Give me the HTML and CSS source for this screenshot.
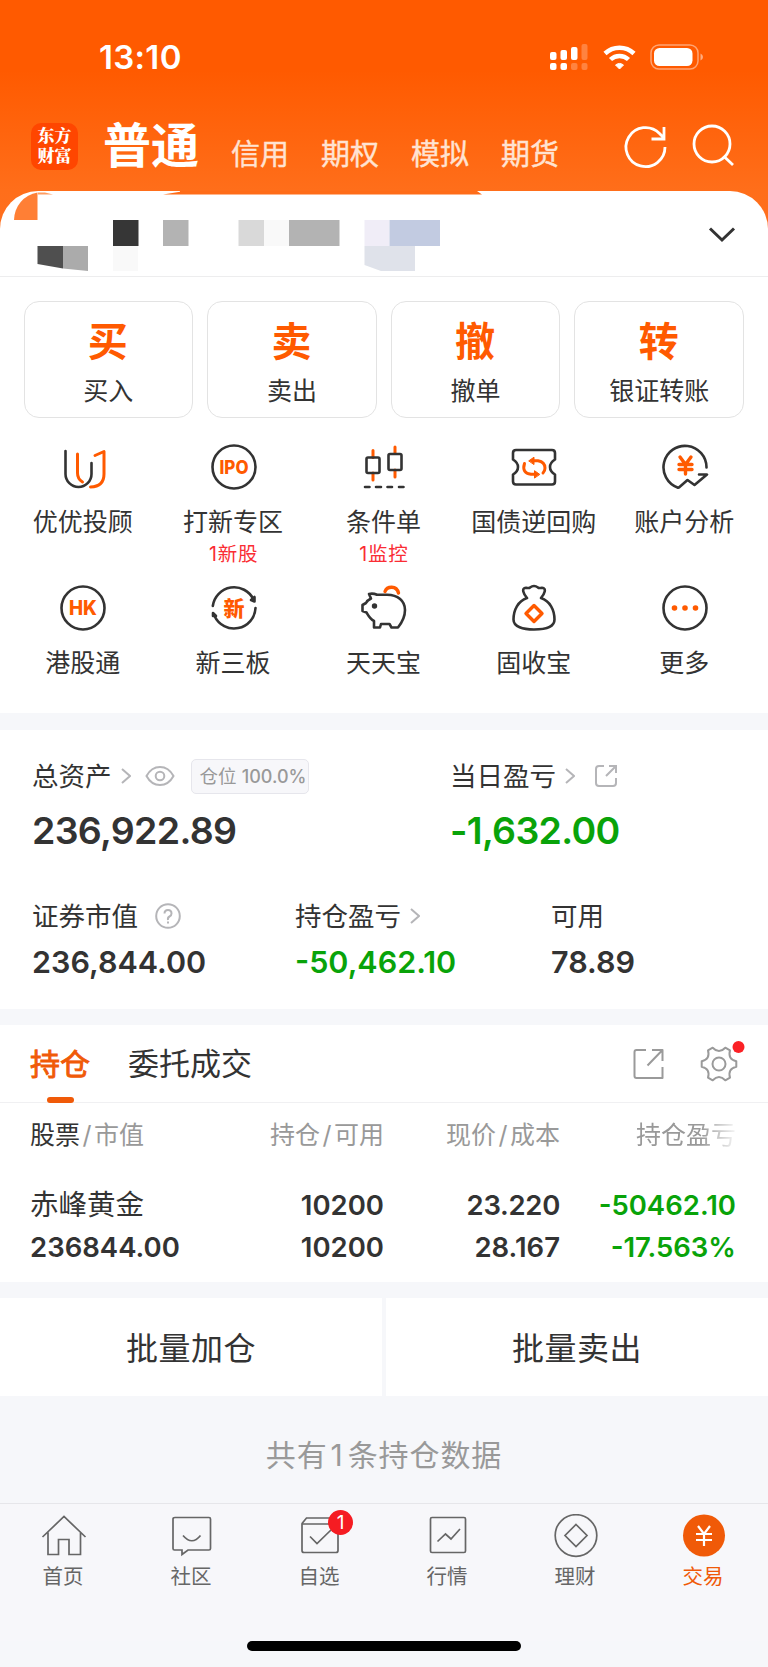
FILE: index.html
```html
<!DOCTYPE html>
<html lang="zh-CN">
<head>
  <meta charset="utf-8">
  <title>交易</title>
  <link rel="stylesheet" href="styles.css">
</head>
<body>
<div class="app">

  <!-- STATUS BAR -->
  <div class="status-bar">
    <span class="clock">13:10</span>
    <svg class="status-icons" width="156" height="30" viewBox="0 0 156 30">
      <g fill="#fff">
        <rect x="0" y="10" width="6.5" height="8" rx="2"/>
        <rect x="10.5" y="8" width="6.5" height="10" rx="2"/>
        <rect x="21" y="5" width="6.5" height="13" rx="2"/>
        <rect x="31.5" y="2" width="6" height="16" rx="2" opacity=".25"/>
        <rect x="0" y="21" width="6.5" height="7" rx="2"/>
        <rect x="10.5" y="21" width="6.5" height="7" rx="2"/>
        <rect x="21" y="21" width="6.5" height="7" rx="2" opacity=".25"/>
        <rect x="31.5" y="21" width="6" height="7" rx="2" opacity=".25"/>
      </g>
      <g fill="none" stroke="#fff" stroke-width="4.5">
        <path d="M55 11.5a21 21 0 0 1 29 0"/>
        <path d="M60.500 17.500a13 13 0 0 1 18 0"/>
      </g>
      <path d="M65.500 23a6.500 6.500 0 0 1 8 0L69.500 27Z" fill="#fff" stroke="#fff" stroke-linejoin="round"/>
      <rect x="101" y="3" width="47" height="24" rx="8" fill="none" stroke="#fff" stroke-width="1.5" opacity=".45"/>
      <rect x="104" y="6" width="38.5" height="18" rx="5.5" fill="#fff"/>
      <path d="M150.500 11.500q2.500 1 2.500 3.500t-2.500 3.500Z" fill="#fff" opacity=".5"/>
    </svg>
  </div>

  <!-- ACCOUNT TYPES -->
  <div class="top-nav">
    <div class="logo"><span>东方</span><span>财富</span></div>
    <span class="nav-active">普通</span>
    <span class="nav-item">信用</span>
    <span class="nav-item">期权</span>
    <span class="nav-item">模拟</span>
    <span class="nav-item">期货</span>
    <svg class="nav-icons" width="116" height="48" viewBox="0 0 116 48" fill="none" stroke="#fff" stroke-width="2.8">
      <path d="M43 24A19.500 19.500 0 1 1 37.500 10.500L42 15M42 4V16H29.500"/>
      <circle cx="90" cy="21" r="18"/>
      <path d="M101.500 33l9.500 9"/>
    </svg>
  </div>

  <div class="panel">
    <!-- masked account name -->
    <div class="account-bar">
      <svg width="484" height="86" viewBox="0 0 484 86">
        <path d="M163 3.5L180 .7V0H477L482 3.5Z" fill="#ff6c18"/>
        <path d="M14 29A28 28 0 0 1 37.500 1.500V29Z" fill="#ff7f35"/>
        <path d="M38 1.500H45L53 3.500H38Z" fill="#ff9d62"/>
        <rect x="113" y="29" width="25.5" height="26" fill="#363636"/>
        <rect x="163" y="29" width="25.5" height="26" fill="#b3b3b3"/>
        <rect x="238.5" y="29" width="25.5" height="26" fill="#d9d9d9"/>
        <rect x="264" y="29" width="25" height="26" fill="#f9f9f9"/>
        <rect x="289" y="29" width="50.5" height="26" fill="#b3b3b3"/>
        <rect x="364.5" y="29" width="25" height="26" fill="#f0edf7"/>
        <rect x="389.5" y="29" width="50.5" height="26" fill="#c2cbe1"/>
        <path d="M37.500 55H63V77.500L37.500 73Z" fill="#4f4f4f"/>
        <path d="M63 55H88V80L63 77.500Z" fill="#ababab"/>
        <rect x="113" y="55" width="25" height="25" fill="#f9f9f9"/>
        <path d="M364.500 55H415V80H381L364.500 74Z" fill="#dfe2ea"/>
      </svg>
      <svg class="arrow-down" width="28" height="18" viewBox="0 0 28 18" fill="none" stroke="#333" stroke-width="3">
        <path d="M2 2.500L14 14L26 2.500"/>
      </svg>
    </div>

    <!-- BUY / SELL -->
    <div class="actions">
      <div class="action"><b>买</b><span>买入</span></div>
      <div class="action"><b>卖</b><span>卖出</span></div>
      <div class="action"><b>撤</b><span>撤单</span></div>
      <div class="action"><b>转</b><span>银证转账</span></div>
    </div>

    <!-- SHORTCUTS -->
    <div class="shortcuts">
      <div class="shortcut">
        <svg class="icon" viewBox="0 0 48 48">
          <path d="M6.500 8V31a13 13 0 0 0 26 0V20"/>
          <path class="hot" d="M18.500 11V30q0 6 5 9M36 12.500L45 8.500V31q0 12.500-13.500 13"/>
        </svg>
        <span>优优投顾</span>
      </div>
      <div class="shortcut">
        <svg class="icon" viewBox="0 0 48 48">
          <circle cx="24" cy="24" r="21.5"/>
          <text x="24" y="30.6" font-size="18.5" textLength="29" lengthAdjust="spacingAndGlyphs">IPO</text>
        </svg>
        <span>打新专区</span><em>1新股</em>
      </div>
      <div class="shortcut">
        <svg class="icon" viewBox="0 0 48 48">
          <path class="hot" d="M13 7.500v7M13 30v7M35 4v6M35 27v7"/>
          <rect x="6.500" y="14.5" width="13" height="15.5" rx="1.5"/>
          <rect x="28.500" y="11" width="13" height="16" rx="1.5"/>
          <path d="M5 44h4.500M16 44h5M27.500 44h4.500M39 44h4.500"/>
        </svg>
        <span>条件单</span><em>1监控</em>
      </div>
      <div class="shortcut">
        <svg class="icon" viewBox="0 0 48 48">
          <path d="M6 7H42q3 0 3 3v6.500q-5 3-5 7.500t5 7.500V38.500q0 3-3 3H6q-3 0-3-3V31.500q5-3 5-7.500t-5-7.500V10q0-3 3-3Z"/>
          <path class="hot" d="M24 17.700H28Q35 19 35 25Q35 28 33 30M14.500 20.500Q11.500 30 21 31.200H24"/>
          <path class="head-fill" d="M19 17.700L24 14.200V21.200ZM29.500 31.200L24.500 27.700V34.700Z"/>
        </svg>
        <span>国债逆回购</span>
      </div>
      <div class="shortcut">
        <svg class="icon" viewBox="0 0 48 48">
          <path d="M45.500 24.500A21.500 21.500 0 1 0 16.500 44.500Q17.500 45 18.500 44L26.500 37L33.500 42L46 31.500H38"/>
          <path class="hot thick" d="M19 14l5.500 7.500l5.500-7.500M24.500 21.500V31M18 21.500h13M18 26.500h13"/>
        </svg>
        <span>账户分析</span>
      </div>
      <div class="shortcut">
        <svg class="icon" viewBox="0 0 48 48">
          <circle cx="24" cy="24" r="21.5"/>
          <text x="24" y="31" font-size="19.5" textLength="28" lengthAdjust="spacingAndGlyphs">HK</text>
        </svg>
        <span>港股通</span>
      </div>
      <div class="shortcut">
        <svg class="icon" viewBox="0 0 48 48">
          <path d="M2.800 22A21.500 21.500 0 0 1 43.500 15.500M45.500 24A21.500 21.500 0 0 1 4.500 32"/>
          <path d="M44.500 13V17.500L41 16ZM3 29L6 32H3Z" fill="#333"/>
          <text x="24" y="31.5" font-size="21">新</text>
        </svg>
        <span>新三板</span>
      </div>
      <div class="shortcut">
        <svg class="icon" viewBox="0 0 48 48">
          <path d="M9 10q4-1 8 .8H27C38 10.800 45 17 45 26C45 33 42 38.500 38 43.500H31.500L29.500 40H21L20 43.500H14V37C10 35 8 31 6.500 28.500L2.500 27V21L6 19C7 17 8 16 11 14.500Z"/>
          <circle cx="14.5" cy="22" r="1.4" fill="#333"/>
          <path class="hot thick" d="M25 7.500C27 2 36.500 1 38.500 9"/>
        </svg>
        <span>天天宝</span>
      </div>
      <div class="shortcut">
        <svg class="icon" viewBox="0 0 48 48">
          <path d="M17 14C13.500 10 11 4 16 3.700Q19 4.500 20 3.500Q24 .5 28 3.500Q29 4.500 32 3.700C37 4 34.500 10 31 14C40 17 44.500 26 44.500 35.500C44.500 43 35 45.500 24 45.500C13 45.500 3.500 43 3.500 35.500C3.500 26 8 17 17 14Z"/>
          <path class="hot thick" d="M24 21.500L32 29.500L24 37.500L16 29.500Z"/>
        </svg>
        <span>固收宝</span>
      </div>
      <div class="shortcut">
        <svg class="icon" viewBox="0 0 48 48">
          <circle cx="24" cy="24" r="21.5"/>
          <path class="dots" d="M13.500 24h0M24 24h0M34.500 24h0"/>
        </svg>
        <span>更多</span>
      </div>
    </div>
  </div>

  <!-- ASSETS -->
  <div class="assets">
    <div class="asset-row">
      <div class="total">
        <div class="label">
          <span>总资产</span>
          <svg class="more" viewBox="0 0 10 16"><path d="M1 1l8 7l-8 7"/></svg>
          <svg class="eye" viewBox="0 0 30 22"><path d="M1.500 11C8 -1 22 -1 28.500 11C22 23 8 23 1.500 11Z"/><circle cx="15" cy="11" r="4.3"/></svg>
          <span class="ratio">仓位 <i>100.0%</i></span>
        </div>
        <div class="amount">236,922.89</div>
      </div>
      <div class="today">
        <div class="label">
          <span>当日盈亏</span>
          <svg class="more" viewBox="0 0 10 16"><path d="M1 1l8 7l-8 7"/></svg>
          <svg class="share" viewBox="0 0 22 22"><path d="M9 1H4Q1 1 1 4V18Q1 21 4 21H18Q21 21 21 18V13M14 1H21V8M21 1L11 11"/></svg>
        </div>
        <div class="amount green">-1,632.00</div>
      </div>
    </div>
    <div class="asset-row second">
      <div class="market">
        <div class="label">
          <span>证券市值</span>
          <svg class="help" viewBox="0 0 26 26"><circle cx="13" cy="13" r="11.8"/><path d="M9.500 10.500Q9.500 7 13 7T16.500 10.500Q16.500 12.500 14.500 13.500T13 17M13 18.500v2"/></svg>
        </div>
        <div class="sum">236,844.00</div>
      </div>
      <div class="profit">
        <div class="label">
          <span>持仓盈亏</span>
          <svg class="more" viewBox="0 0 10 16"><path d="M1 1l8 7l-8 7"/></svg>
        </div>
        <div class="sum green">-50,462.10</div>
      </div>
      <div class="usable">
        <div class="label"><span>可用</span></div>
        <div class="sum">78.89</div>
      </div>
    </div>
  </div>

  <!-- HOLDINGS -->
  <div class="holdings">
    <div class="tabs">
      <span class="tab current">持仓</span>
      <span class="tab">委托成交</span>
      <svg class="tab-icons" width="112" height="44" viewBox="0 0 112 44" fill="none" stroke="#9a9a9a" stroke-width="2" stroke-linejoin="round">
        <path d="M13 9H3.500Q1.500 9 1.500 11V35Q1.500 37 3.500 37H29.500V26M19 9H29.500V20M29 9.500L14.500 24.500"/>
        <circle cx="86" cy="23" r="6.5"/>
        <path d="M103.300 25.700Q94.500 27.900 97 36.600L92.300 39.300Q86 32.700 79.700 39.300L75 36.600Q77.500 27.900 68.700 25.700V20.300Q77.500 18.100 75 9.400L79.700 6.700Q86 13.300 92.300 6.700L97 9.400Q94.500 18.100 103.300 20.300Z"/>
        <circle cx="105.5" cy="6" r="6" fill="#fb2126" stroke="none"/>
      </svg>
    </div>
    <div class="row head">
      <span><b>股票</b><i>/</i>市值</span>
      <span>持仓<i>/</i>可用</span>
      <span>现价<i>/</i>成本</span>
      <span class="fade">持仓盈亏</span>
    </div>
    <div class="row first">
      <span class="name">赤峰黄金</span>
      <span>10200</span>
      <span class="price">23.220</span>
      <span class="green">-50462.10</span>
    </div>
    <div class="row">
      <span>236844.00</span>
      <span>10200</span>
      <span>28.167</span>
      <span class="green">-17.563%</span>
    </div>
  </div>

  <div class="batch">
    <div class="batch-btn">批量加仓</div>
    <div class="batch-btn">批量卖出</div>
  </div>
  <div class="count">共有<i>1</i>条持仓数据</div>

  <!-- BOTTOM TABS -->
  <div class="tabbar">
    <div class="tabbar-item">
      <svg viewBox="0 0 48 44"><path d="M2.500 23L24 2.500L45.500 23M8 18.500V40.500H18.500V25.500H29V40.500H40.500V18.500"/></svg>
      <span>首页</span>
    </div>
    <div class="tabbar-item">
      <svg viewBox="0 0 48 44"><path d="M7 3.500H41Q42.500 3.500 42.500 5V34.500Q42.500 36 41 36H20L14 40.500V36H6.500Q5 36 5 34.500V5Q5 3.500 7 3.500ZM15 21.500Q24 32 32.500 21.500"/></svg>
      <span>社区</span>
    </div>
    <div class="tabbar-item">
      <svg viewBox="0 0 48 44"><path d="M6 9.500L10.500 4H37L42 9.500M6 10H42V36.500Q42 38.500 40 38.500H8Q6 38.500 6 36.500ZM14 22.500L21 29.500L35.500 15.500"/></svg>
      <i class="dot">1</i>
      <span>自选</span>
    </div>
    <div class="tabbar-item">
      <svg viewBox="0 0 48 44"><rect x="6.500" y="3.5" width="35" height="35" rx="1.5"/><path d="M13.500 27.500L21.500 20L27 25L36 15"/></svg>
      <span>行情</span>
    </div>
    <div class="tabbar-item">
      <svg viewBox="0 0 48 44"><circle cx="24" cy="21.5" r="20.8"/><path d="M24 10.500L35 21.500L24 32.500L13 21.500Z"/></svg>
      <span>理财</span>
    </div>
    <div class="tabbar-item on">
      <svg viewBox="0 0 48 44"><circle cx="24" cy="21.5" r="21"/><path d="M18 12l6 8l6-8M24 20V32M16 20h16M16 26h16"/></svg>
      <span>交易</span>
    </div>
  </div>
  <div class="home-indicator"></div>
</div>
</body>
</html>
```
FILE: styles.css
```css
body {
  margin: 0;
  background-color: #f6f7fa;
  font-family: Inter, "Noto Sans CJK SC", sans-serif;
  color: #333;
}
.app {
  display: flex;
  flex-direction: column;
  width: 768px;
  height: 1667px;
  overflow: hidden;
  background: linear-gradient(#ff5a00 0, #ff5a00 70px, #ff6e1a 190px, #ff7020 240px) no-repeat;
  background-size: 100% 240px;
}
svg {
  flex: none;
  display: block;
}
i, em {
  font-style: normal;
}
.green {
  color: #09a309;
}

/* Status bar */
.status-bar {
  display: flex;
  justify-content: space-between;
  height: 72px;
  padding: 42px 62px 0 99px;
  box-sizing: border-box;
}
.clock {
  font-size: 33px;
  font-weight: 600;
  line-height: 31px;
  letter-spacing: .3px;
  color: #fff;
}

/* Top navigation */
.top-nav {
  display: flex;
  height: 119px;
  padding: 0 30px 0 31px;
  box-sizing: border-box;
  color: #fff;
}
.logo {
  display: flex;
  flex-direction: column;
  justify-content: center;
  align-items: center;
  width: 47px;
  height: 47px;
  margin: 51px 25px 0 0;
  border-radius: 10px;
  background-color: #ff4600;
  font-family: "Liberation Serif", "Noto Serif CJK SC", "Noto Sans CJK SC", serif;
  font-size: 17px;
  font-weight: 900;
  line-height: 20px;
}
.nav-active {
  margin: 44px 32px 0 0;
  font-size: 48px;
  font-weight: 700;
  line-height: 60px;
}
.nav-item {
  margin: 63px 32px 0 0;
  font-size: 29px;
  line-height: 40px;
  color: #ffe3d2;
  -webkit-text-stroke: .4px #ffe3d2;
}
.nav-icons {
  margin: 51px 0 0 auto;
}

/* White panel */
.panel {
  height: 522px;
  background-color: #fff;
  border-radius: 38px 38px 0 0;
}
.account-bar {
  display: flex;
  justify-content: space-between;
  height: 85px;
  border-bottom: 1.5px solid #ededee;
}
.arrow-down {
  margin: 35px 32px 0 0;
}
.actions {
  display: flex;
  gap: 14px;
  padding: 24px 24px 0 23.5px;
}
.action {
  flex: 1;
  display: flex;
  flex-direction: column;
  align-items: center;
  height: 117px;
  box-sizing: border-box;
  border: 1.5px solid #e3e3e3;
  border-radius: 15px;
}
.action b {
  margin-top: 15px;
  padding-right: 1px;
  font-size: 40px;
  line-height: 50px;
  color: #ff5a00;
}
.action span {
  margin-top: 7px;
  font-size: 25px;
  line-height: 34px;
}
.shortcuts {
  display: flex;
  flex-wrap: wrap;
  padding: 25px 8px 0;
}
.shortcut {
  display: flex;
  flex-direction: column;
  align-items: center;
  width: 20%;
  height: 141px;
}
.shortcut span {
  margin-top: 13px;
  padding-right: 1px;
  font-size: 25px;
  line-height: 36px;
}
.shortcut em {
  margin-top: 1px;
  font-size: 19.5px;
  line-height: 27px;
  letter-spacing: .8px;
  color: #fa2d34;
}
.icon {
  width: 48px;
  height: 48px;
  fill: none;
  stroke: #333;
  stroke-width: 2.6;
  stroke-linejoin: round;
  stroke-linecap: round;
}
.icon .hot {
  stroke: #ff5a00;
  stroke-width: 3;
}
.icon .thick {
  stroke-width: 3.4;
}
.icon .head-fill {
  fill: #ff5a00;
  stroke: #ff5a00;
  stroke-width: 1;
}
.icon .dots {
  stroke: #ff5a00;
  stroke-width: 5.6;
}
.icon text {
  fill: #ff5a00;
  stroke: none;
  font-weight: 800;
  text-anchor: middle;
}

/* Assets */
.assets {
  height: 279px;
  margin-top: 17px;
  padding: 0 32px;
  box-sizing: border-box;
  background-color: #fff;
}
.asset-row {
  display: flex;
  padding-top: 28px;
}
.second {
  padding-top: 44px;
}
.total {
  width: 418px;
}
.market {
  width: 263px;
}
.profit {
  width: 256px;
}
.label {
  display: flex;
  align-items: center;
  height: 36px;
  font-size: 26.5px;
  line-height: 36px;
}
.label svg {
  fill: none;
  stroke: #b5b5b8;
  stroke-width: 2;
}
.more {
  width: 10px;
  height: 16px;
  margin-left: 9px;
}
.eye {
  width: 30px;
  height: 22px;
  margin-left: 14px;
}
.share {
  width: 22px;
  height: 22px;
  margin-left: 20px;
}
.help {
  width: 26px;
  height: 26px;
  margin-left: 17px;
}
.ratio {
  margin-left: 16px;
  width: 118px;
  height: 35px;
  padding-left: 8px;
  box-sizing: border-box;
  border: 1.5px solid #e6e6ec;
  border-radius: 5px;
  background-color: #f7f7fa;
  font-size: 18.5px;
  line-height: 33px;
  white-space: nowrap;
  color: #999;
}
.ratio i {
  font-size: 18px;
  font-weight: 500;
}
.amount {
  margin-top: 13px;
  font-size: 37.5px;
  font-weight: 600;
  line-height: 48px;
  letter-spacing: -.7px;
}
.second .label {
  margin-top: -1px;
}
.sum {
  margin-top: 8px;
  font-size: 30.5px;
  font-weight: 600;
  line-height: 40px;
}

/* Holdings */
.holdings {
  height: 257px;
  margin-top: 16px;
  background-color: #fff;
}
.tabs {
  display: flex;
  height: 78px;
  padding: 0 23px 0 30px;
  box-sizing: border-box;
  border-bottom: 1px solid #f0f0f2;
}
.tab {
  margin: 18px 38px 0 0;
  font-size: 31px;
  line-height: 42px;
}
.current {
  position: relative;
  font-size: 30px;
  color: #f05a08;
  -webkit-text-stroke: .9px #f05a08;
}
.current::after {
  content: "";
  position: absolute;
  left: 17px;
  top: 54px;
  width: 27px;
  height: 6px;
  border-radius: 3px;
  background-color: #f05a08;
}
.tab-icons {
  margin: 16px 0 0 auto;
}
.row {
  display: grid;
  grid-template-columns: 200px 154px 176px 176px;
  padding-left: 30px;
  font-size: 27.5px;
  font-weight: 600;
  line-height: 42px;
  text-align: right;
}
.row span:first-child {
  text-align: left;
}
.head {
  padding-top: 11px;
  font-size: 25px;
  font-weight: 400;
  color: #999;
}
.head b {
  font-weight: 400;
  color: #333;
}
.head i {
  padding: 0 2.5px;
}
.first {
  margin-top: 28px;
}
.row .name {
  font-size: 28.5px;
  font-weight: 400;
}
.row .price {
  letter-spacing: -.3px;
}
.fade {
  -webkit-mask-image: linear-gradient(to right, #000 80%, transparent 102%);
  mask-image: linear-gradient(to right, #000 80%, transparent 102%);
}

/* Batch buttons */
.batch {
  display: flex;
  gap: 4px;
  margin-top: 16px;
}
.batch-btn {
  flex: 1;
  height: 98px;
  background-color: #fff;
  font-size: 32px;
  line-height: 102px;
  letter-spacing: .5px;
  text-align: center;
}
.count {
  height: 107px;
  font-size: 30px;
  line-height: 119px;
  letter-spacing: .9px;
  text-align: center;
  color: #999;
}
.count i {
  padding: 0 4px 0 3px;
}

/* Bottom tab bar */
.tabbar {
  display: flex;
  border-top: 1.5px solid #e6e6ea;
  background-color: #f7f7fa;
  color: #666;
}
.tabbar-item {
  position: relative;
  flex: 1;
  display: flex;
  flex-direction: column;
  align-items: center;
  height: 137px;
  padding-top: 10px;
  box-sizing: border-box;
  font-size: 20.5px;
  line-height: 28px;
}
.tabbar-item svg {
  width: 48px;
  height: 44px;
  margin-bottom: 5px;
  fill: none;
  stroke: #666;
  stroke-width: 1.7;
}
.tabbar-item span {
  padding-right: 2px;
}
.dot {
  position: absolute;
  left: 72px;
  top: 6px;
  width: 25px;
  height: 25px;
  border-radius: 50%;
  background-color: #f51c22;
  color: #fff;
  font-size: 19px;
  line-height: 26px;
  text-align: center;
}
.on {
  color: #f05a08;
}
.tabbar-item.on svg {
  stroke: #fff;
  stroke-width: 2.2;
}
.on circle {
  fill: #f05a08;
  stroke: none;
}
.home-indicator {
  width: 274px;
  height: 10px;
  margin: 0 auto;
  border-radius: 5px;
  background-color: #000;
}
```
